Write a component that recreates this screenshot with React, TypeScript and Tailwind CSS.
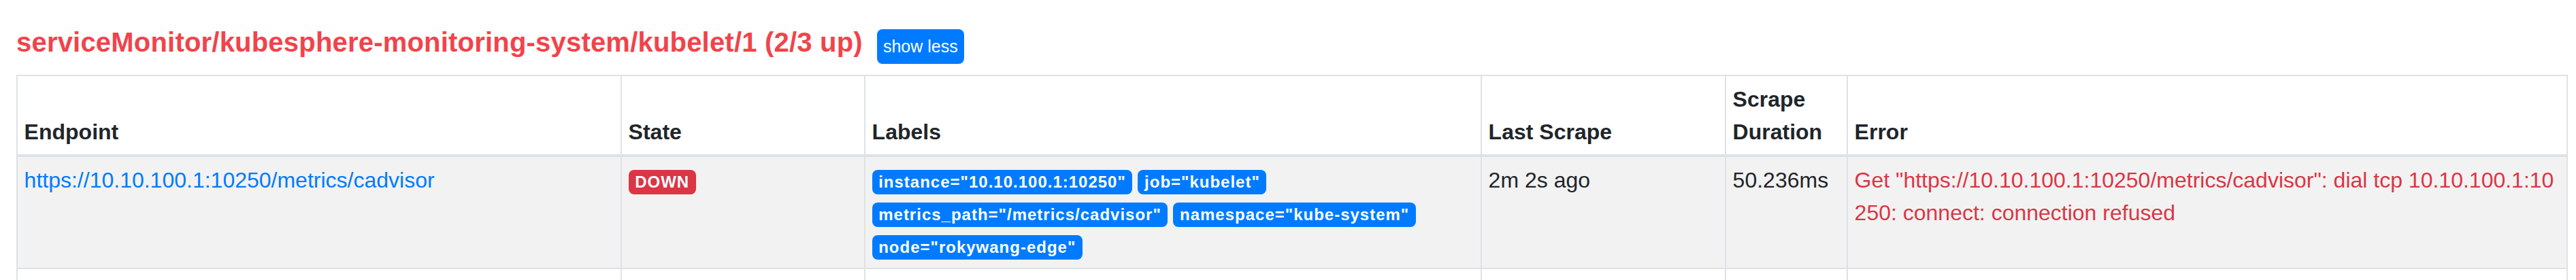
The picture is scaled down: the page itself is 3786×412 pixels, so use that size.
import React from 'react'

interface Target {
  endpoint: string
  state: 'UP' | 'DOWN'
  labels: string[]
  lastScrape: string
  duration: string
  error?: string
}

const TARGETS: Target[] = [
  {
    endpoint: 'https://10.10.100.1:10250/metrics/cadvisor',
    state: 'DOWN',
    labels: [
      'instance="10.10.100.1:10250"',
      'job="kubelet"',
      'metrics_path="/metrics/cadvisor"',
      'namespace="kube-system"',
      'node="rokywang-edge"',
    ],
    lastScrape: '2m 2s ago',
    duration: '50.236ms',
    error:
      'Get "https://10.10.100.1:10250/metrics/cadvisor": dial tcp 10.10.100.1:10250: connect: connection refused',
  },
]

const HEADERS = ['Endpoint', 'State', 'Labels', 'Last Scrape', 'Scrape Duration', 'Error']

function Badge({ children, color }: { children: React.ReactNode; color: 'blue' | 'red' | 'green' }) {
  const bg = color === 'blue' ? 'bg-[#007bff]' : color === 'red' ? 'bg-[#dc3545]' : 'bg-[#28a745]'
  return (
    <span
      className={`${bg} inline-block rounded-[8px] px-[9.6px] py-[6px] text-[24px] leading-none font-bold tracking-[1px] text-white whitespace-nowrap align-baseline`}
    >
      {children}
    </span>
  )
}

export default function App() {
  return (
    <div className="h-screen overflow-hidden bg-white font-['Liberation_Sans',Arial,sans-serif] text-[#212529]">
      <div className="pl-[24px] pt-[38px]">
        {/* Title */}
        <div className="flex items-start">
          <h2 className="text-[40px] leading-[48px] font-bold tracking-[0.2px] text-[#f2434a]">
            serviceMonitor/kubesphere-monitoring-system/kubelet/1 (2/3 up)
          </h2>
          <button className="ml-[21px] mt-[5px] flex h-[51px] w-[128px] items-center justify-center rounded-[8px] bg-[#007bff] text-[25px] text-white">
            show less
          </button>
        </div>

        {/* Targets */}
        <table className="mt-[16px] w-[3750px] table-fixed border-collapse border-2 border-[#dee2e6] text-[32px] leading-[48px]">
          <colgroup>
            <col className="w-[888px]" />
            <col className="w-[358px]" />
            <col className="w-[906px]" />
            <col className="w-[359px]" />
            <col className="w-[179px]" />
            <col className="w-[1058px]" />
          </colgroup>
          <thead>
            <tr>
              {HEADERS.map((h) => (
                <th
                  key={h}
                  className="border-2 border-b-4 border-[#dee2e6] p-[9.6px] text-left align-bottom font-bold"
                >
                  {h}
                </th>
              ))}
            </tr>
          </thead>
          <tbody>
            {TARGETS.map((t) => (
              <tr key={t.endpoint} className="bg-[#f2f2f2]">
                <td className="border-2 border-[#dee2e6] p-[9.6px] align-top">
                  <a className="text-[#007bff]">{t.endpoint}</a>
                </td>
                <td className="border-2 border-[#dee2e6] p-[9.6px] align-top">
                  <Badge color={t.state === 'UP' ? 'green' : 'red'}>{t.state}</Badge>
                </td>
                <td className="border-2 border-[#dee2e6] p-[9.6px] align-top">
                  {t.labels.map((l) => (
                    <span key={l} className="mr-[8px] inline-block">
                      <Badge color="blue">{l}</Badge>
                    </span>
                  ))}
                </td>
                <td className="border-2 border-[#dee2e6] p-[9.6px] align-top">{t.lastScrape}</td>
                <td className="border-2 border-[#dee2e6] p-[9.6px] align-top">{t.duration}</td>
                <td className="border-2 border-[#dee2e6] p-[9.6px] align-top break-all text-[#dc3545]">
                  {t.error}
                </td>
              </tr>
            ))}
            {/* next target row, below the fold */}
            <tr className="h-[68px] bg-white">
              {HEADERS.map((h) => (
                <td key={h} className="border-2 border-[#dee2e6] p-[9.6px]" />
              ))}
            </tr>
          </tbody>
        </table>
      </div>
    </div>
  )
}
